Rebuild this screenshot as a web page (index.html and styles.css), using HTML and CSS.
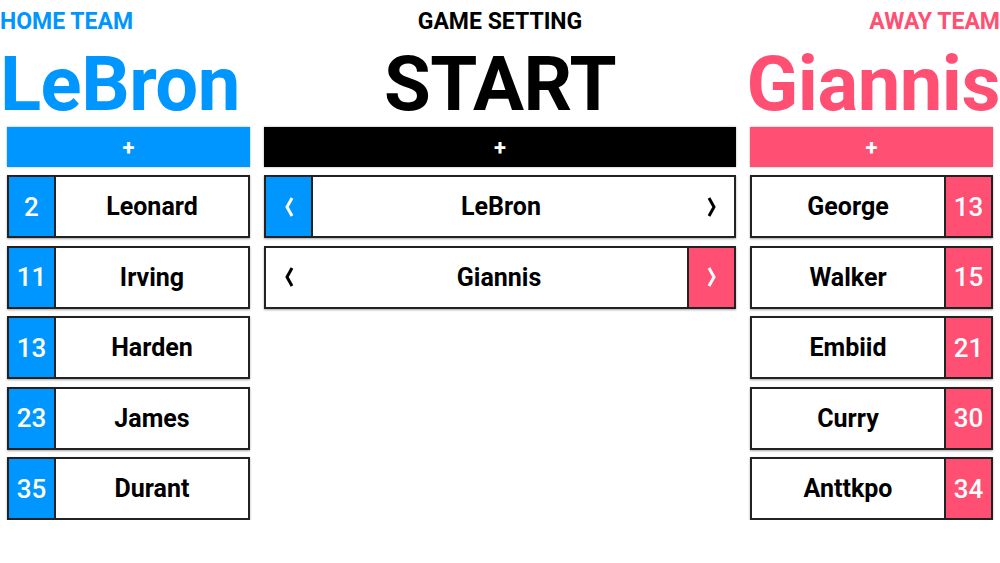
FILE: index.html
```html
<!DOCTYPE html>
<html lang="en">
<head>
  <meta charset="UTF-8">
  <title>Game Setting</title>
  <link rel="stylesheet" href="styles.css">
</head>
<body>

  <!-- Header -->
  <header class="top">
    <div class="team home">
      <div class="label">HOME TEAM</div>
      <div class="big">LeBron</div>
    </div>
    <div class="team mid">
      <div class="label">GAME SETTING</div>
      <div class="big">START</div>
    </div>
    <div class="team away">
      <div class="label">AWAY TEAM</div>
      <div class="big">Giannis</div>
    </div>
  </header>

  <!-- Board -->
  <main class="board">
    <section class="col">
      <button class="add blue">+</button>
      <div class="row"><span class="num blue">2</span><span class="name">Leonard</span></div>
      <div class="row"><span class="num blue">11</span><span class="name">Irving</span></div>
      <div class="row"><span class="num blue">13</span><span class="name">Harden</span></div>
      <div class="row"><span class="num blue">23</span><span class="name">James</span></div>
      <div class="row"><span class="num blue">35</span><span class="name">Durant</span></div>
    </section>

    <section class="col">
      <button class="add black">+</button>
      <div class="row">
        <span class="arrow blue"><svg viewBox="0 0 12 22"><path d="M9 2 L4 11 L9 20"/></svg></span>
        <span class="name">LeBron</span>
        <span class="arrow"><svg viewBox="0 0 12 22"><path d="M3 2 L8 11 L3 20"/></svg></span>
      </div>
      <div class="row">
        <span class="arrow"><svg viewBox="0 0 12 22"><path d="M9 2 L4 11 L9 20"/></svg></span>
        <span class="name">Giannis</span>
        <span class="arrow pink"><svg viewBox="0 0 12 22"><path d="M3 2 L8 11 L3 20"/></svg></span>
      </div>
    </section>

    <section class="col">
      <button class="add pink">+</button>
      <div class="row"><span class="name">George</span><span class="num pink">13</span></div>
      <div class="row"><span class="name">Walker</span><span class="num pink">15</span></div>
      <div class="row"><span class="name">Embiid</span><span class="num pink">21</span></div>
      <div class="row"><span class="name">Curry</span><span class="num pink">30</span></div>
      <div class="row"><span class="name">Anttkpo</span><span class="num pink">34</span></div>
    </section>
  </main>

</body>
</html>
```

FILE: styles.css
```css
/* Basic styling */
body {
  font-family: Roboto, "Liberation Sans", sans-serif;
  margin: 0;
  padding: 0;
  background-color: #ffffff;
  color: #000;
  width: 1000px;
}

/* Header */
.top {
  display: grid;
  grid-template-columns: 1fr auto 1fr;
  height: 127px;
}

.team .label {
  font-size: 23px;
  font-weight: bold;
  line-height: 24px;
  padding-top: 10px;
}

.team .big {
  font-size: 76px;
  font-weight: bold;
  line-height: 76px;
  margin-top: 12px;
  letter-spacing: -0.5px;
}

.home { color: #0096ff; text-align: left; }
.mid { color: #000; text-align: center; }
.away { color: #ff5073; text-align: right; }

/* Board columns */
.board {
  display: grid;
  grid-template-columns: 243px 472px 243px;
  gap: 14px;
  padding: 0 7px;
}

.col {
  display: flex;
  flex-direction: column;
  gap: 7.5px;
}

.add {
  height: 40px;
  border: none;
  color: #fff;
  font-family: inherit;
  font-size: 22px;
  font-weight: bold;
  box-shadow: 0 0 2px rgba(0, 0, 0, 0.35);
  margin-bottom: 0.5px;
}

.blue { background-color: #0096ff; }
.black { background-color: #000; }
.pink { background-color: #ff5073; }

.row {
  display: flex;
  height: 63px;
  box-sizing: border-box;
  border: 2px solid #222;
  background: #fff;
  box-shadow: 0 1px 2px rgba(0, 0, 0, 0.35);
}

.row .name {
  flex: 1;
  display: flex;
  align-items: center;
  justify-content: center;
  font-size: 25px;
  font-weight: bold;
}

.row .num {
  width: 45px;
  display: flex;
  align-items: center;
  justify-content: center;
  color: #fff;
  font-size: 26px;
  font-weight: 500;
}

.row .num:first-child { border-right: 2px solid #222; }
.row .num:last-child { border-left: 2px solid #222; }

.arrow {
  width: 45px;
  display: flex;
  align-items: center;
  justify-content: center;
}

.arrow.blue { border-right: 2px solid #222; }
.arrow.pink { border-left: 2px solid #222; }

.arrow svg {
  width: 12px;
  height: 22px;
  fill: none;
  stroke: #000;
  stroke-width: 3;
}

.arrow.blue svg,
.arrow.pink svg { stroke: #fff; }
```
